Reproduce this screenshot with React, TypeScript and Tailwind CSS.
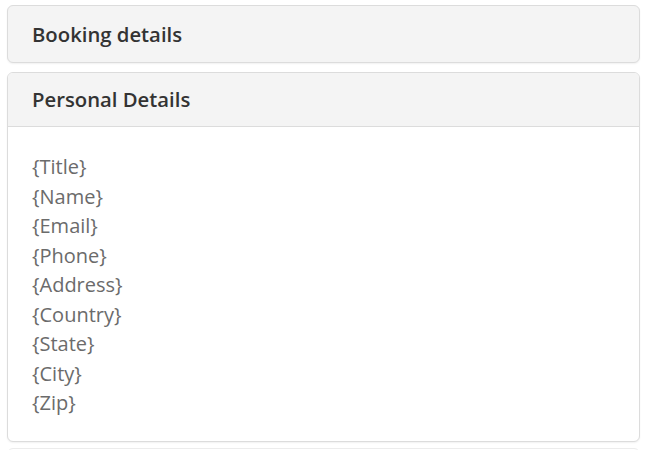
import React from "react";

const fields = ["{Title}", "{Name}", "{Email}", "{Phone}", "{Address}", "{Country}", "{State}", "{City}", "{Zip}"];

export default function App() {
  return (
    <div
      className="w-[650px] h-[450px] overflow-hidden bg-white px-[7px] pt-[5px]"
      style={{ fontFamily: '"Open Sans", sans-serif' }}
    >
      <div className="flex flex-col gap-[9px] w-[633px]">
        <div className="h-[58px] rounded-[6px] border border-[#dcdcdc] bg-[#f4f4f4] shadow-[0_1px_2px_rgba(0,0,0,0.06)] flex items-center px-[24px]">
          <span className="text-[20.3px] font-semibold text-[#333]">Booking details</span>
        </div>
        <div className="rounded-[6px] border border-[#dcdcdc] bg-white shadow-[0_1px_2px_rgba(0,0,0,0.06)] overflow-hidden">
          <div className="h-[54px] bg-[#f4f4f4] border-b border-[#dcdcdc] flex items-center px-[24px]">
            <span className="text-[20.3px] font-semibold text-[#333]">Personal Details</span>
          </div>
          <div className="pl-[24px] pt-[25px] pb-[23px] flex flex-col">
            {fields.map((f) => (
              <div key={f} className="text-[20px] leading-[29.5px] text-[#6b6b6b]">
                {f}
              </div>
            ))}
          </div>
        </div>
        <div className="h-[40px] rounded-[6px] border border-[#ececec] bg-white mt-[-3px]" />
      </div>
    </div>
  );
}
